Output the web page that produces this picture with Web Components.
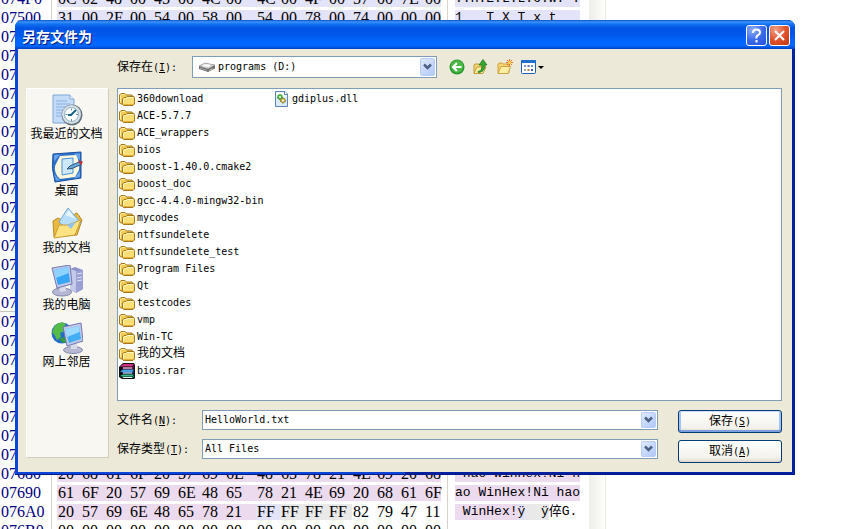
<!DOCTYPE html>
<html lang="zh-CN">
<head>
<meta charset="utf-8">
<title>另存文件为</title>
<style>
  body {
    background: #fff;
    color: #000;
    font: 12px/17px "DejaVu Sans Mono", "Noto Sans CJK SC", monospace;
    height: 100vh;
    margin: 0;
    overflow: hidden;
    position: relative;
  }
  save-dialog {
    left: 15px;
    position: absolute;
    right: 54px;
    top: 20px;
  }
</style>
</head>
<body>
<hex-view></hex-view>
<save-dialog heading="另存文件为">
  <place-item slot="place" icon="recent">我最近的文档</place-item>
  <place-item slot="place" icon="desktop">桌面</place-item>
  <place-item slot="place" icon="documents">我的文档</place-item>
  <place-item slot="place" icon="computer">我的电脑</place-item>
  <place-item slot="place" icon="network">网上邻居</place-item>

  <file-item slot="file" icon="folder">360download</file-item>
  <file-item slot="file" icon="folder">ACE-5.7.7</file-item>
  <file-item slot="file" icon="folder">ACE_wrappers</file-item>
  <file-item slot="file" icon="folder">bios</file-item>
  <file-item slot="file" icon="folder">boost-1.40.0.cmake2</file-item>
  <file-item slot="file" icon="folder">boost_doc</file-item>
  <file-item slot="file" icon="folder">gcc-4.4.0-mingw32-bin</file-item>
  <file-item slot="file" icon="folder">mycodes</file-item>
  <file-item slot="file" icon="folder">ntfsundelete</file-item>
  <file-item slot="file" icon="folder">ntfsundelete_test</file-item>
  <file-item slot="file" icon="folder">Program Files</file-item>
  <file-item slot="file" icon="folder">Qt</file-item>
  <file-item slot="file" icon="folder">testcodes</file-item>
  <file-item slot="file" icon="folder">vmp</file-item>
  <file-item slot="file" icon="folder">Win-TC</file-item>
  <file-item slot="file" icon="folder" wide>我的文档</file-item>
  <file-item slot="file" icon="rar">bios.rar</file-item>
  <file-item slot="file" icon="dll">gdiplus.dll</file-item>
</save-dialog>

<script>
// [width, height, markup]
const ICONS = {
  folder: [16, 16, `
    <path d="M.5 12V4L2 2.500h4L7.500 4H13l.5 1v8H2z" fill="#f3c954" stroke="#a5781c"/>
    <path d="M1.500 11V5L3 3.500h3" stroke="#fff0a8" fill="none"/>
    <path d="M3.500 13V8L5 6.500h2L8 5.500h7l.5 1V13l-1.500 1.500H4.500z" fill="#fbdf76" stroke="#a5781c"/>
    <path d="M4.500 12V8.500l1-1h2l1-1H14" stroke="#fffac8" fill="none"/>
    <path d="M5 13.500h9l.5-1" stroke="#e3b03c" fill="none"/>`],
  rar: [16, 16, `
    <path d="M0 4L4 0h11l1 2v13l-1 1H3l-3-2z" fill="#141018"/>
    <path d="M1 3.500L4.500 1H15l-2 2.500z" fill="#d0307e"/><path d="M3 4.500h10l2-2v1.500L13.500 6H4z" fill="#8b0f58"/>
    <path d="M4 5h9" stroke="#eee"/>
    <path d="M1 8.500L4 6.500h11L13 9H3z" fill="#4aa0e4"/><path d="M3 9h10l2-1.500V9l-1.500 1.500H4z" fill="#1b4f9c"/>
    <path d="M4 10h9" stroke="#eee"/>
    <path d="M1 13l3-1.500h11L13 13.500H3z" fill="#34bd8a"/><path d="M3 13.500h10l2-1v1.500l-1 1H4z" fill="#0b7b4c"/>
    <path d="M4 14.500h9" stroke="#eee"/>`],
  dll: [16, 16, `
    <path d="M1.500.5h9.500l2.500 2.500v12.500h-12z" fill="#dcebfb" stroke="#5d84b4"/>
    <path d="M2.500 1.500h7v3h3v2h-10z" fill="#fff"/>
    <path d="M10.500.5v3h3" fill="#fff" stroke="#5d84b4"/>
    <circle cx="6" cy="6" r="2.500" fill="#48b03c" stroke="#2b8a2d" stroke-dasharray="2 1"/><circle cx="6" cy="6" r="1" fill="#fff"/>
    <circle cx="9" cy="9.500" r="2.500" fill="#e2a83c" stroke="#4f7434" stroke-dasharray="2 1"/><circle cx="9" cy="9.500" r="1" fill="#fff"/>`],
  drive: [18, 12, `
    <path d="M1 5l6-3 10 2v3.500L10 11 1 8z" fill="#6d6d6d"/>
    <path d="M1 5l6-3 10 2-7 4z" fill="#cfcfcf" stroke="#929292" stroke-width=".5"/>
    <ellipse cx="8.500" cy="4.500" rx="4" ry="1.300" fill="#f8f8f8"/>
    <path d="M2 7l7 2.500" stroke="#a8a8a8"/><path d="M11 9.500l4-2" stroke="#b9cfae"/>`],
  back: [16, 16, `
    <circle cx="8" cy="8" r="7.500" fill="#24962a"/><circle cx="8" cy="7.500" r="6.300" fill="#4db748"/>
    <path d="M12.500 8H4.500M8 4L4 8l4 4" fill="none" stroke="#fff" stroke-width="2"/>`],
  up: [16, 16, `
    <path d="M1 14V6l1-1h4l1 1h4l-1 8z" fill="#f4d472" stroke="#c59a34"/>
    <path d="M1 14.500L4 8h9l-3 6.500z" fill="#fdf0a4" stroke="#c59a34"/>
    <path d="M5 12.500c3-.5 4-2.500 4-6.500H6L10 .5 14 6h-2c0 5-3 7.500-7 7.500z" fill="#36a832" stroke="#17701a" stroke-width=".7"/>`],
  newfolder: [16, 16, `
    <path d="M1 14V5l1-1h3l1 1h6v9z" fill="#f4d472" stroke="#d3a140"/>
    <path d="M1 14.500L4 7.500h9.500l-2.500 7z" fill="#fdf0a4" stroke="#d3a140"/>
    <path d="M12.500 0v7M9 3.500h7M10 1l5 5M15 1l-5 5" stroke="#ee6b2a"/>
    <circle cx="12.500" cy="3.500" r="1.500" fill="#ffe04d"/>`],
  views: [23, 16, `
    <rect x=".5" y="1.500" width="14" height="13" rx="1" fill="#fff" stroke="#1c5fb8"/>
    <path d="M0 1h15v3H0z" fill="#226fd2"/>
    <path d="M3 6h2v2H3zM10 6h2v2h-2z" fill="#739acb"/><path d="M6.500 6h2v2h-2z" fill="#5d6db0"/>
    <path d="M3 10h2v2H3z" fill="#8fb4a0"/><path d="M6.500 10h2v2h-2z" fill="#bd8155"/><path d="M10 10h2v2h-2z" fill="#3d5ea8"/>
    <path d="M17 7h6l-3 3z" fill="#000"/>`],
  recent: [32, 32, `
    <path d="M2 1h17l4 4v24H2z" fill="#c4dcf8" stroke="#7fa6d8"/><path d="M19 1v4h4" fill="#fff" stroke="#7fa6d8"/>
    <path d="M5 7h11M5 10h14M5 13h10M5 16h7M5 19h6M5 22h6" stroke="#8bb0e2"/>
    <circle cx="21" cy="21" r="10.500" fill="#64707c"/><circle cx="20.500" cy="20.500" r="9.500" fill="#d5e0e8"/>
    <circle cx="20.500" cy="20.500" r="7" fill="#fff" stroke="#8fb0c4"/>
    <path d="M20.500 14.500v2M20.500 25v2M14.500 20.500h2M25 20.500h2" stroke="#6c8c9c"/>
    <path d="M25 16l-5 5h-3" fill="none" stroke="#126585" stroke-width="2"/>`],
  desktop: [32, 32, `
    <path d="M2 3l28-2v26L4 31q-4-13-2-28z" fill="#2d72c9" stroke="#1b4f9f"/>
    <path d="M3 4l6-.5-6 7zM23 2.500h6v7zM3 23l6 6.500H5zM29 20v6l-6 1.500z" fill="#67a6ee"/>
    <path d="M9 5l16-1q4 6 3 15l-4 7-15 2q-6-5-5-13z" fill="#fff8dc"/>
    <path d="M11 8l11-1v15l-11 2z" fill="#cde7fb" stroke="#4892d9"/>
    <path d="M28 11l-9 4-3 3 5-.5 9-4z" fill="#6eabdc" stroke="#29517c"/><path d="M27 9.500l5 1-2 4z" fill="#bd3439"/>`],
  documents: [32, 32, `
    <path d="M3 29L2 13l5-3 4 2 15-7 5 7-5 15z" fill="#e9b940" stroke="#b78b2a"/>
    <path d="M8 14L17 0l13 15-11 9z" fill="#b7def9" stroke="#75a8da"/><path d="M14 7l4-5 7 9z" fill="#e4f5ff"/>
    <path d="M3 30l5-13h9l13-5-6 15z" fill="#fde37f" stroke="#c89c34"/>
    <path d="M16 17l9-3-5 7z" fill="#8dc3ed"/>`],
  computer: [32, 32, `
    <path d="M19 4l5-2 8 3v19l-7 4-6-3z" fill="#8c91c8"/><path d="M19 4l6 2v22l-6-3z" fill="#c5c9ea"/>
    <path d="M25 6l7-1v19l-7 4z" fill="#9ba0d4"/><path d="M26 9l5-1M26 13l5-1M26 16l5-1" stroke="#e1e4f8"/>
    <ellipse cx="11" cy="27" rx="9.500" ry="4" fill="#b5b8d4" stroke="#8286ad"/><path d="M8 20l7-1v7l-6 1z" fill="#d8dbea"/>
    <path d="M1 3l18-3 2 19-15 4z" fill="#c4c9e8" stroke="#6f79b3"/><path d="M3 5l14-3 2 15-12 3z" fill="#37a5f5"/>
    <path d="M3 5l14-3 1 6L5 13z" fill="#8ed2ff"/>`],
  network: [32, 32, `
    <circle cx="11" cy="11" r="10.500" fill="#236bcb"/>
    <path d="M3 5q6-7 12-3l-3 4 2 3-5 2 1 4-4 3-3-6-2-1z" fill="#55bd45"/><path d="M8 17l5-2 4 5-5 1z" fill="#349d3b"/>
    <ellipse cx="22" cy="28" rx="9.500" ry="3.500" fill="#b7b9d3" stroke="#8589ac"/><path d="M19 21l7-1v7h-6z" fill="#d8dbea"/>
    <path d="M12 5l18-4 2 18-16 5z" fill="#c4c9e8" stroke="#6f79b3"/><path d="M14 7l14-3 2 13-12 4z" fill="#43adf5"/>
    <path d="M14 7l14-3 .7 6L16 15z" fill="#9edaff"/>`],
  arrow: [9, 8, '<path d="M1 1.500l3.500 3.500L8 1.500" fill="none" stroke="#4d6185" stroke-width="2.500"/>'],
};

function icon(name) {
  const [w, h, markup] = ICONS[name];
  return `<svg width="${w}" height="${h}" viewBox="0 0 ${w} ${h}" aria-hidden="true">${markup}</svg>`;
}

class HexView extends HTMLElement {
  constructor() {
    super();
    this.attachShadow({ mode: 'open' });
    // tint letters: l lavender, p pink, g grey, . none
    const data = {
      0x74F0: ['0C 02 48 00 45 00 4C 00 4C 00 4F 00 57 00 7E 00', '..H.E.L.L.O.W. .', 'llllllllllllllll'],
      0x7500: ['31 00 2E 00 54 00 58 00 54 00 78 00 74 00 00 00', '1   T X T x t   ', 'llllllllllllllll'],
      0x7680: ['20 68 61 6F 20 57 69 6E 48 65 78 21 4E 69 20 68', ' hao WinHex!Ni h', 'pppppppppppppppp'],
      0x7690: ['61 6F 20 57 69 6E 48 65 78 21 4E 69 20 68 61 6F', 'ao WinHex!Ni hao', 'pppppppppppppppp'],
      0x76A0: ['20 57 69 6E 48 65 78 21 FF FF FF FF 82 79 47 11', ' WinHex!ÿ  ÿ倅G.', 'pppppppplggg....'],
      0x76B0: ['00 00 00 00 00 00 00 00 00 00 00 00 00 00 00 00', '', '................'],
    };
    let rows = '';
    for (let addr = 0x74F0; addr <= 0x76B0; addr += 16) {
      const label = addr.toString(16).toUpperCase().padStart(5, '0');
      const [hex, text, tint] = data[addr] || ['', '', ''];
      const bytes = hex.split(' ').map((b, i) => `<td class="${tint[i]}">${b}</td>`).join('');
      const chars = [...text].map((c, i) => `<span class="${tint[i]}">${c}</span>`).join('');
      rows += `<tr class="${addr === 0x7600 ? 'sector' : ''}"><th>${label}</th>${hex ? bytes : '<td colspan="16"></td>'}<td class="text">${chars}</td></tr>`;
    }
    this.shadowRoot.innerHTML = `
      <style>
        :host {
          display: flex;
          height: 100%;
          overflow: hidden;
          font: 16px/16px "Liberation Serif", "Noto Sans CJK SC", serif;
        }
        table {
          --rule: linear-gradient(#d8d4cc, #d8d4cc);
          align-self: flex-start;
          background: var(--rule) 51px 0 / 1px 100% no-repeat, var(--rule) 447px 0 / 1px 100% no-repeat;
          border-collapse: separate;
          border-spacing: 0 3px;
          margin-top: -12px;
          table-layout: fixed;
          width: 589px;
        }
        th, td { height: 16px; padding: 0 0 0 1px; text-align: left; white-space: nowrap; }
        th { color: #000080; font-weight: normal; }
        .sector th { box-shadow: 0 -2px #fff, 0 -3px #c8c4bc; }
        .l { background: #e3e3fa; }
        .p { background: #ecdaee; }
        .g { background: #e9e9e9; }
        .text { font: 13px/16px "Liberation Mono", "Noto Sans CJK SC", monospace; padding-left: 14px; white-space: pre; }
        .text span { display: inline-block; height: 16px; vertical-align: top; }
        .gutter { background: linear-gradient(90deg, #eeeee8, #fdfdfa); border-right: 1px solid #ebe9e0; width: 16px; }
      </style>
      <table>
        <colgroup>
          <col style="width:57px"><col span="7" style="width:24px"><col style="width:31px">
          <col span="7" style="width:24px"><col style="width:17px"><col>
        </colgroup>
        <tbody>${rows}</tbody>
      </table>
      <div class="gutter"></div>
    `;
  }
}

class PlaceItem extends HTMLElement {
  constructor() {
    super();
    this.attachShadow({ mode: 'open' });
    this.shadowRoot.innerHTML = `
      <style>
        :host { display: block; }
        button {
          align-items: center;
          background: none;
          border: 0;
          color: inherit;
          display: flex;
          flex-flow: column;
          font: inherit;
          height: 57px;
          padding: 5px 2px 0 0;
          white-space: nowrap;
          width: 100%;
        }
        svg { flex: none; }
      </style>
      <button type="button">${icon(this.getAttribute('icon'))}<span><slot></slot></span></button>
    `;
  }
}

class FileItem extends HTMLElement {
  constructor() {
    super();
    this.attachShadow({ mode: 'open' });
    this.shadowRoot.innerHTML = `
      <style>
        :host { align-items: center; display: flex; font-size: 10px; gap: 2px; height: 17px; white-space: nowrap; }
        :host([wide]) { font-size: 12px; }
        svg { flex: none; }
      </style>
      ${icon(this.getAttribute('icon'))}<span><slot></slot></span>
    `;
  }
}

// Label plus drop-down; with the "editable" attribute it is a text box with a drop button.
class ComboField extends HTMLElement {
  constructor() {
    super();
    this.attachShadow({ mode: 'open' });
    const value = this.getAttribute('value');
    const lead = this.getAttribute('icon');
    const control = this.hasAttribute('editable')
      ? `<input id="control" type="text" value="${value}"><button type="button" class="drop" aria-label="列表">${icon('arrow')}</button>`
      : `${lead ? icon(lead) : ''}<select id="control"><option>${value}</option></select><span class="drop">${icon('arrow')}</span>`;
    this.shadowRoot.innerHTML = `
      <style>
        :host { align-items: center; display: flex; }
        label { flex: none; width: var(--label-width, 85px); }
        small { font-size: 10px; }
        .box {
          align-items: center;
          background: #fff;
          border: 1px solid #7f9db9;
          box-sizing: border-box;
          display: flex;
          flex: 1;
          height: var(--box-height, 20px);
          min-width: 0;
          padding: 0 1px 0 2px;
        }
        .box > svg { flex: none; margin: 0 2px 0 3px; }
        input, select {
          appearance: none;
          background: none;
          border: 0;
          color: inherit;
          flex: 1;
          font: 10px/16px "DejaVu Sans Mono", monospace;
          min-width: 0;
          outline: 0;
          padding: 0;
        }
        .drop {
          align-items: center;
          background: linear-gradient(135deg, #e1eafe, #aec8f7);
          border: 1px solid #b8ccf5;
          border-radius: 2px;
          box-sizing: border-box;
          display: flex;
          height: calc(100% - 2px);
          justify-content: center;
          padding: 0;
          width: 15px;
        }
      </style>
      <label for="control">${this.getAttribute('label')}<small>(<u>${this.getAttribute('key')}</u>):</small></label>
      <div class="box">${control}</div>
    `;
  }
}

class XpButton extends HTMLElement {
  constructor() {
    super();
    this.attachShadow({ mode: 'open' });
    this.shadowRoot.innerHTML = `
      <style>
        :host { display: block; }
        button {
          background: linear-gradient(#fff, #f3f2ec 80%, #dcd8cc);
          border: 1px solid #003c74;
          border-radius: 3px;
          box-sizing: border-box;
          color: inherit;
          font: inherit;
          height: 23px;
          padding: 0;
          width: 100%;
        }
        :host([default]) button { box-shadow: inset 0 1px #cee0fb, inset 0 -2px #7d9fe0, inset 2px 0 #a6c3f3, inset -2px 0 #a6c3f3; }
        small { font-size: 10px; }
      </style>
      <button type="button"><slot></slot><small>(<u>${this.getAttribute('key')}</u>)</small></button>
    `;
  }
}

class SaveDialog extends HTMLElement {
  constructor() {
    super();
    this.attachShadow({ mode: 'open' });
    this.shadowRoot.innerHTML = `
      <style>
        :host {
          background: linear-gradient(90deg, #0a46d8 50%, #0020a0 50%);
          border-bottom: 1px solid #001a8c;
          border-radius: 7px 7px 0 0;
          display: block;
          overflow: hidden;
        }
        header {
          align-items: center;
          background: linear-gradient(#0a50c8, #3c94ff 2px, #1272f2 4px, #0054e3 8px, #0058ea 15px, #0066ff 22px, #0066fc 26px, #003fc8);
          box-sizing: border-box;
          display: flex;
          gap: 2px;
          height: 29px;
          padding: 2px 5px 0 7px;
        }
        h1 { color: #fff; flex: 1; font: bold 14px/20px "Noto Sans CJK SC", sans-serif; margin: 0; text-shadow: 1px 1px #0a1883; }
        header button {
          background: radial-gradient(circle at 30% 20%, #8fb0f8, #3c6cec 50%, #2450d4);
          border: 1px solid #fff;
          border-radius: 3px;
          height: 21px;
          padding: 0;
          width: 21px;
        }
        header .close { background: radial-gradient(circle at 30% 20%, #f0a088, #e0522c 50%, #c03a14); }
        header svg { display: block; margin: auto; }
        .body {
          background: #ece9d8;
          display: flex;
          flex-flow: column;
          gap: 10px;
          margin: 0 3px 2px;
          padding: 7px 10px 9px 8px;
        }
        .top { align-items: center; display: flex; gap: 12px; padding-left: 91px; }
        .top combo-field { --box-height: 22px; --label-width: 75px; width: 320px; }
        .tools { display: flex; gap: 8px; }
        .tools button { background: none; border: 0; display: flex; padding: 0; }
        .columns { display: flex; gap: 8px; }
        nav {
          background: #f8f7f2;
          border: 1px solid #fff;
          border-bottom-color: #d0cdbd;
          border-right-color: #d0cdbd;
          box-sizing: border-box;
          flex: none;
          margin-bottom: 5px;
          width: 83px;
        }
        main { display: flex; flex: 1; flex-flow: column; gap: 9px; min-width: 0; }
        .files {
          align-content: start;
          background: #fff;
          border: 1px solid #7f9db9;
          display: grid;
          grid-auto-columns: 155px;
          grid-auto-flow: column;
          grid-template-rows: repeat(17, 17px);
          padding: 1px 1px 21px;
        }
        .bottom { display: flex; gap: 20px; }
        .fields { display: flex; flex: 1; flex-flow: column; gap: 9px; }
        .actions { display: flex; flex-flow: column; gap: 7px; width: 104px; }
      </style>
      <header>
        <h1>${this.getAttribute('heading')}</h1>
        <button type="button" aria-label="帮助"><svg width="15" height="17" viewBox="0 0 15 17"><path d="M4 6q0-3.500 3.500-3.500T11 5.500q0 1.500-2 2.700T7.500 11.500M7.500 13v2.500" fill="none" stroke="#fff" stroke-width="2"/></svg></button>
        <button type="button" class="close" aria-label="关闭"><svg width="15" height="15" viewBox="0 0 15 15"><path d="M3 3l9 9M12 3l-9 9" stroke="#fff" stroke-width="2"/></svg></button>
      </header>
      <div class="body">
        <div class="top">
          <combo-field label="保存在" key="I" value="programs (D:)" icon="drive"></combo-field>
          <div class="tools">
            <button type="button" aria-label="后退">${icon('back')}</button>
            <button type="button" aria-label="向上">${icon('up')}</button>
            <button type="button" aria-label="新建文件夹">${icon('newfolder')}</button>
            <button type="button" aria-label="查看">${icon('views')}</button>
          </div>
        </div>
        <div class="columns">
          <nav><slot name="place"></slot></nav>
          <main>
            <div class="files"><slot name="file"></slot></div>
            <div class="bottom">
              <div class="fields">
                <combo-field label="文件名" key="N" value="HelloWorld.txt" editable></combo-field>
                <combo-field label="保存类型" key="T" value="All Files"></combo-field>
              </div>
              <div class="actions">
                <xp-button key="S" default>保存</xp-button>
                <xp-button key="A">取消</xp-button>
              </div>
            </div>
          </main>
        </div>
      </div>
    `;
  }
}

customElements.define('hex-view', HexView);
customElements.define('place-item', PlaceItem);
customElements.define('file-item', FileItem);
customElements.define('combo-field', ComboField);
customElements.define('xp-button', XpButton);
customElements.define('save-dialog', SaveDialog);
</script>
</body>
</html>
